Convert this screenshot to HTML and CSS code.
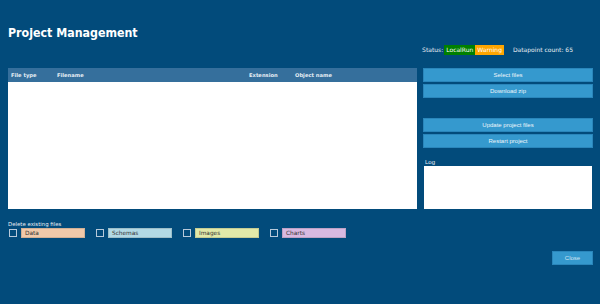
FILE: index.html
```html
<!DOCTYPE html>
<html>
<head>
<meta charset="utf-8">
<link rel="stylesheet" href="styles.css">
</head>
<body>
<div class="page">
  <h1 class="title">Project Management</h1>
  <div class="status-row">
    <span class="status-label">Status:</span>
    <span class="badge badge-green">LocalRun</span>
    <span class="badge badge-orange">Warning</span>
    <span class="count">Datapoint count: 65</span>
  </div>
  <div class="main">
    <div class="table">
      <div class="thead">
        <span>File type</span>
        <span>Filename</span>
        <span>Extension</span>
        <span>Object name</span>
      </div>
      <div class="tbody"></div>
    </div>
    <div class="side">
      <button class="btn">Select files</button>
      <button class="btn">Download zip</button>
      <button class="btn btn-gap">Update project files</button>
      <button class="btn">Restart project</button>
      <div class="log-label">Log</div>
      <div class="log"></div>
    </div>
  </div>
  <div class="delete-label">Delete existing files</div>
  <div class="checks">
    <div class="check"><span class="box"></span><span class="tag tag-data">Data</span></div>
    <div class="check"><span class="box"></span><span class="tag tag-schemas">Schemas</span></div>
    <div class="check"><span class="box"></span><span class="tag tag-images">Images</span></div>
    <div class="check"><span class="box"></span><span class="tag tag-charts">Charts</span></div>
  </div>
  <div class="footer">
    <button class="btn btn-close">Close</button>
  </div>
</div>
</body>
</html>
```
FILE: styles.css
```css
html, body {
  margin: 0;
  padding: 0;
  background: #024b7b;
  width: 600px;
  height: 304px;
  overflow: hidden;
}
.page {
  padding: 26px 7px 0 8px;
  font-family: "DejaVu Sans", sans-serif;
  color: #ffffff;
}
.title {
  margin: 0;
  font-family: "DejaVu Sans Condensed", "DejaVu Sans", sans-serif;
  font-stretch: condensed;
  font-size: 12.3px;
  line-height: 14px;
  font-weight: bold;
  color: #ffffff;
}
.status-row {
  margin-top: 4px;
  height: 11px;
  display: flex;
  justify-content: flex-end;
  align-items: center;
  padding-right: 20px;
  font-size: 6px;
  line-height: 10px;
  color: #e8eef4;
}
.status-label {
  margin-right: 1px;
}
.badge {
  height: 10px;
  padding: 0 2px;
  color: #ffffff;
}
.badge-green { background: #008000; }
.badge-orange { background: #ffa500; }
.count {
  margin-left: 9px;
}
.main {
  margin-top: 13px;
  display: flex;
  gap: 6px;
  height: 141px;
}
.table {
  width: 409px;
  display: flex;
  flex-direction: column;
}
.thead {
  height: 14px;
  background: #356f9c;
  display: grid;
  grid-template-columns: 46px 192px 46px 1fr;
  align-items: center;
  padding-left: 3px;
  font-size: 5.2px;
  font-weight: bold;
  color: #e6eef5;
}
.tbody {
  flex: 1;
  background: #ffffff;
}
.side {
  flex: 1;
  display: flex;
  flex-direction: column;
}
.btn {
  height: 14px;
  margin: 0 0 2px 0;
  padding: 0;
  border: 1px solid #2a86bb;
  background: #3599ce;
  color: #eef5fa;
  font-family: "Liberation Sans", Arial, sans-serif;
  font-size: 6px;
  line-height: 12px;
  text-align: center;
}
.btn-gap {
  margin-top: 18px;
}
.log-label {
  margin-top: 9px;
  height: 7px;
  padding-left: 2px;
  font-family: "Liberation Sans", Arial, sans-serif;
  font-size: 6px;
  line-height: 7px;
  color: #e8eef4;
}
.log {
  flex: 1;
  margin: 0 1px;
  background: #ffffff;
}
.delete-label {
  margin-top: 12px;
  height: 7px;
  font-size: 5.4px;
  line-height: 7px;
  color: #e8eef4;
}
.checks {
  display: flex;
  gap: 11px;
  height: 10px;
  padding-left: 1px;
}
.check {
  display: flex;
  align-items: center;
  gap: 4px;
}
.box {
  width: 6px;
  height: 6px;
  border: 1px solid #b7c9da;
}
.tag {
  width: 59px;
  height: 8px;
  padding-left: 3px;
  border: 1px solid rgba(0, 0, 0, 0.12);
  font-size: 5.8px;
  line-height: 8px;
  color: #333333;
}
.tag-data { background: #f0c9aa; }
.tag-schemas { background: #b2d9e5; }
.tag-images { background: #e1e9a9; }
.tag-charts { background: #d8b9e1; }
.footer {
  margin-top: 13px;
  display: flex;
  justify-content: flex-end;
}
.btn-close {
  width: 41px;
  margin: 0;
  color: #d0e4f2;
}
```
